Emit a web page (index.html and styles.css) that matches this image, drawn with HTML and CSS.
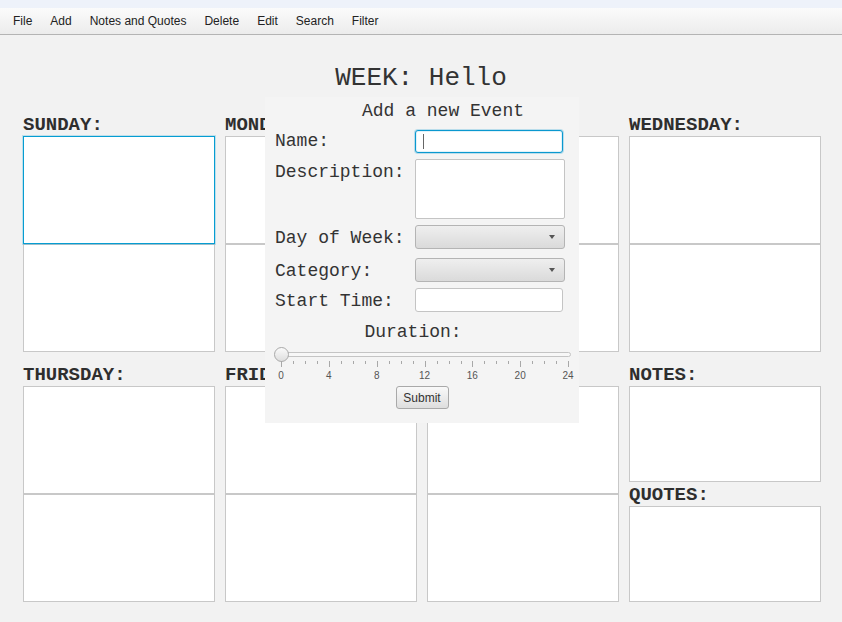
FILE: index.html
```html
<!DOCTYPE html>
<html lang="en">
<head>
<meta charset="utf-8">
<title>Week Planner</title>
<link rel="stylesheet" href="styles.css">
</head>
<body>
<div class="topstrip"></div>
<nav class="menubar">
  <span class="menu-item">File</span>
  <span class="menu-item">Add</span>
  <span class="menu-item">Notes and Quotes</span>
  <span class="menu-item">Delete</span>
  <span class="menu-item">Edit</span>
  <span class="menu-item">Search</span>
  <span class="menu-item">Filter</span>
</nav>
<main class="main">
  <h1 class="title">WEEK: Hello</h1>
  <div class="week-grid">
    <section class="day">
      <h2 class="day-title">SUNDAY:</h2>
      <div class="box focused"></div>
      <div class="box"></div>
    </section>
    <section class="day">
      <h2 class="day-title">MONDAY:</h2>
      <div class="box"></div>
      <div class="box"></div>
    </section>
    <section class="day">
      <h2 class="day-title">TUESDAY:</h2>
      <div class="box"></div>
      <div class="box"></div>
    </section>
    <section class="day">
      <h2 class="day-title">WEDNESDAY:</h2>
      <div class="box"></div>
      <div class="box"></div>
    </section>
    <section class="day">
      <h2 class="day-title">THURSDAY:</h2>
      <div class="box"></div>
      <div class="box"></div>
    </section>
    <section class="day">
      <h2 class="day-title">FRIDAY:</h2>
      <div class="box"></div>
      <div class="box"></div>
    </section>
    <section class="day">
      <h2 class="day-title">SATURDAY:</h2>
      <div class="box"></div>
      <div class="box"></div>
    </section>
    <section class="day">
      <h2 class="day-title">NOTES:</h2>
      <div class="box short"></div>
      <h2 class="day-title">QUOTES:</h2>
      <div class="box short"></div>
    </section>
  </div>
</main>

<div class="popup">
  <div class="popup-title">Add a new Event</div>
  <div class="form">
    <label class="lbl lbl-name">Name:</label>
    <div class="input focused-input"><span class="caret"></span></div>
    <label class="lbl">Description:</label>
    <div class="textarea"></div>
    <label class="lbl">Day of Week:</label>
    <div class="combo"><span class="arrow"></span></div>
    <label class="lbl gap-top">Category:</label>
    <div class="combo gap-top"><span class="arrow"></span></div>
    <label class="lbl">Start Time:</label>
    <div class="input"></div>
  </div>
  <div class="duration">Duration:</div>
  <div class="slider">
    <div class="track"></div>
    <div class="thumb"></div>
  </div>
  <svg class="ticks" width="296" height="8" viewBox="0 0 296 8">
    <g stroke="#a8a8a8" stroke-width="1">
      <path d="M6.5 0V6M18.5 0V3M30.5 0V3M42.5 0V3M54.5 0V6M66.5 0V3M78.5 0V3M90.5 0V3M102.5 0V6M114.5 0V3M126.5 0V3M138.5 0V3M150.5 0V6M162.5 0V3M174.5 0V3M186.5 0V3M197.5 0V6M209.5 0V3M221.5 0V3M233.5 0V3M245.5 0V6M257.5 0V3M269.5 0V3M281.5 0V3M293.5 0V6"/>
    </g>
  </svg>
  <div class="tick-labels">
    <span>0</span><span>4</span><span>8</span><span>12</span><span>16</span><span>20</span><span>24</span>
  </div>
  <div class="submit-row">
    <button class="submit" type="button">Submit</button>
  </div>
</div>
</body>
</html>
```

FILE: styles.css
```css
html, body {
  margin: 0;
  padding: 0;
}
body {
  width: 842px;
  height: 622px;
  background: #f2f2f2;
  font-family: "Liberation Mono", "Courier New", monospace;
  color: #333;
  overflow: hidden;
}
.topstrip {
  height: 8px;
  background: #eef2fa;
}
.menubar {
  height: 26px;
  border-bottom: 1px solid #b4b4b4;
  background: linear-gradient(#fbfbfb, #ececec);
  display: flex;
  align-items: center;
  padding-left: 4px;
  font-family: "Liberation Sans", Arial, sans-serif;
  font-size: 12px;
  color: #222;
}
.menu-item {
  padding: 0 9px;
  line-height: 26px;
}
.main {
  padding-top: 29px;
}
.title {
  margin: 0 0 20px 0;
  height: 28px;
  line-height: 28px;
  text-align: center;
  font-weight: normal;
  font-size: 26px;
  color: #333;
}
.week-grid {
  display: grid;
  grid-template-columns: repeat(4, 192px);
  column-gap: 10px;
  row-gap: 10px;
  padding-left: 23px;
}
.day {
  display: flex;
  flex-direction: column;
}
.day-title {
  margin: 0;
  box-sizing: border-box;
  height: 24px;
  padding-top: 1px;
  line-height: 25px;
  font-size: 19px;
  font-weight: bold;
  color: #2e2e2e;
  white-space: nowrap;
  overflow: visible;
}
.box {
  box-sizing: border-box;
  height: 108px;
  background: #fff;
  border: 1px solid #c8c8c8;
}
.box.short {
  height: 96px;
}
.box.focused {
  border-color: #069dd2;
  box-shadow: 0 0 0 1px rgba(6, 157, 210, 0.22);
  position: relative;
  z-index: 1;
}

/* popup */
.popup {
  position: absolute;
  left: 265px;
  top: 97px;
  width: 314px;
  height: 326px;
  box-sizing: border-box;
  background: #f4f4f4;
  padding-top: 3px;
  color: #333;
}
.popup-title {
  height: 22px;
  line-height: 22px;
  font-size: 18px;
  text-align: center;
  padding-left: 42px;
}
.form {
  margin-top: 8px;
  padding-left: 10px;
  display: grid;
  grid-template-columns: 140px 150px;
  row-gap: 6px;
  align-items: start;
}
.lbl {
  font-size: 18px;
  line-height: 22px;
  padding-top: 2px;
  white-space: nowrap;
}
.lbl.lbl-name {
  padding-top: 0;
  line-height: 23px;
}
.gap-top {
  margin-top: 3px;
}
.input {
  box-sizing: border-box;
  width: 148px;
  height: 24px;
  background: #fff;
  border: 1px solid #c4c4c4;
  border-radius: 3px;
  position: relative;
}
.focused-input {
  height: 23px;
  border-color: #0a98cf;
  box-shadow: 0 0 0 1px rgba(10, 152, 207, 0.25), inset 0 0 0 1px rgba(10, 152, 207, 0.12);
}
.caret {
  position: absolute;
  left: 7px;
  top: 3px;
  width: 1px;
  height: 15px;
  background: #666;
}
.textarea {
  box-sizing: border-box;
  width: 150px;
  height: 60px;
  background: #fff;
  border: 1px solid #c4c4c4;
  border-radius: 2px;
}
.combo {
  box-sizing: border-box;
  width: 150px;
  height: 24px;
  border: 1px solid #b4b4b4;
  border-radius: 3px;
  background: linear-gradient(#efefef, #dadada);
  display: flex;
  justify-content: flex-end;
  align-items: center;
  padding-right: 9px;
}
.arrow {
  width: 0;
  height: 0;
  border-left: 3.5px solid transparent;
  border-right: 3.5px solid transparent;
  border-top: 4px solid #555;
}
.duration {
  margin-top: 9px;
  height: 22px;
  line-height: 22px;
  font-size: 18px;
  text-align: center;
  padding-right: 18px;
}
.slider {
  position: relative;
  box-sizing: border-box;
  height: 18px;
  padding-top: 9px;
  margin-left: 10px;
  width: 296px;
}
.track {
  height: 5px;
  box-sizing: border-box;
  border: 1px solid #c4c4c4;
  border-radius: 3px;
  background: #f7f7f7;
}
.thumb {
  position: absolute;
  left: -1px;
  top: 4px;
  width: 15px;
  height: 15px;
  box-sizing: border-box;
  border-radius: 50%;
  border: 1px solid #a9a9a9;
  background: linear-gradient(#fafafa, #dedede);
}
.ticks {
  display: block;
  margin-left: 10px;
}
.tick-labels {
  margin-left: 16px;
  margin-top: 1px;
  width: 287px;
  height: 12px;
  display: flex;
  justify-content: space-between;
  font-family: "Liberation Sans", Arial, sans-serif;
  font-size: 10px;
  line-height: 12px;
  color: #555;
}
.tick-labels span {
  width: 16px;
  margin: 0 -8px;
  text-align: center;
}
.submit-row {
  margin-top: 4px;
  display: flex;
  justify-content: center;
}
.submit {
  box-sizing: border-box;
  width: 53px;
  height: 23px;
  padding: 0;
  border: 1px solid #a9a9a9;
  border-radius: 3px;
  background: linear-gradient(#f9f9f9, #dedede);
  font-family: "Liberation Sans", Arial, sans-serif;
  font-size: 12px;
  color: #333;
}
```
